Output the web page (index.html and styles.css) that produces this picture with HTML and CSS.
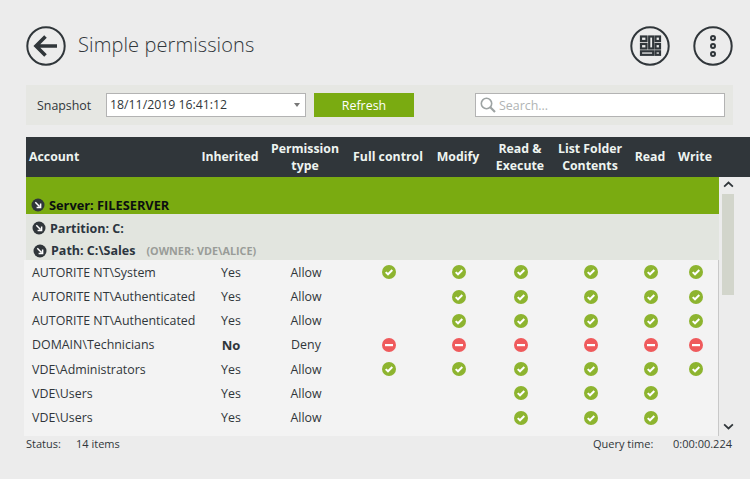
FILE: index.html
```html
<!DOCTYPE html>
<html lang="en">
<head>
<meta charset="utf-8">
<title>Simple permissions</title>
<link rel="stylesheet" href="styles.css">
</head>
<body>
<svg class="defs" width="0" height="0" aria-hidden="true">
  <symbol id="ok" viewBox="0 0 14 14"><circle cx="7" cy="7" r="7" fill="#8db42f"/><path d="M3.7 7.100 6 9.300 10.300 5" fill="none" stroke="#fff" stroke-width="2"/></symbol>
  <symbol id="no" viewBox="0 0 14 14"><circle cx="7" cy="7" r="7" fill="#ef5a5c"/><rect x="3" y="6" width="8" height="2.200" fill="#fff"/></symbol>
  <symbol id="down" viewBox="0 0 14 14"><circle cx="7" cy="7" r="6.500" fill="#30363a"/><path d="M4.300 4.300 8.500 8.500M9.600 5.600V9.600H5.600" fill="none" stroke="#fff" stroke-width="1.500"/></symbol>
</svg>
<div class="app">
  <header class="top">
    <div class="title-wrap">
      <svg class="round" viewBox="0 0 40 40"><circle cx="20" cy="20" r="18.700" fill="none" stroke="#30363a" stroke-width="2"/><path d="M31 20H11M19.500 10.500 10 20l9.500 9.500" fill="none" stroke="#30363a" stroke-width="3.600"/></svg>
      <h1>Simple permissions</h1>
    </div>
    <div class="actions">
      <svg class="round" viewBox="0 0 40 40"><circle cx="20" cy="20" r="18.700" fill="none" stroke="#30363a" stroke-width="2"/><g fill="none" stroke="#30363a" stroke-width="2.200"><rect x="11" y="10.500" width="5.500" height="4.500"/><rect x="11" y="18" width="5.500" height="4.500"/><rect x="19.200" y="10.500" width="4" height="12"/><rect x="25.500" y="10.500" width="4.500" height="4.500"/><rect x="25.500" y="18" width="4.500" height="4.500"/><rect x="11" y="25.300" width="12.200" height="3.500"/><rect x="25.500" y="25.300" width="4.500" height="3.500"/></g></svg>
      <svg class="round" viewBox="0 0 40 40"><circle cx="20" cy="20" r="18.700" fill="none" stroke="#30363a" stroke-width="2"/><g fill="none" stroke="#30363a" stroke-width="2"><circle cx="20" cy="12" r="2"/><circle cx="20" cy="20" r="2"/><circle cx="20" cy="28" r="2"/></g></svg>
    </div>
  </header>
  <div class="toolbar">
    <span class="label">Snapshot</span>
    <div class="select">18/11/2019 16:41:12<span class="caret"></span></div>
    <button class="refresh">Refresh</button>
    <div class="search">
      <svg class="lens" viewBox="0 0 16 16"><circle cx="6.500" cy="6.500" r="5.200" fill="none" stroke="#9da3a3" stroke-width="1.600"/><path d="M10.300 10.300 15 15" stroke="#9da3a3" stroke-width="2.200"/></svg>
      <span>Search...</span>
    </div>
  </div>
  <div class="head row-grid">
    <div class="left">Account</div><div>Inherited</div><div>Permission<br>type</div><div>Full control</div><div>Modify</div><div>Read &amp;<br>Execute</div><div>List Folder<br>Contents</div><div>Read</div><div>Write</div>
  </div>
  <div class="content">
    <div class="list">
      <div class="server"><svg class="arrow"><use href="#down"/></svg>Server: FILESERVER</div>
      <div class="groups">
        <div class="partition"><svg class="arrow"><use href="#down"/></svg>Partition: C:</div>
        <div class="path"><svg class="arrow"><use href="#down"/></svg>Path: C:\Sales<span class="owner">(OWNER: VDE\ALICE)</span></div>
      </div>
      <div class="rows">
        <div class="row row-grid"><div class="left">AUTORITE NT\System</div><div>Yes</div><div>Allow</div><div><svg class="st"><use href="#ok"/></svg></div><div><svg class="st"><use href="#ok"/></svg></div><div><svg class="st"><use href="#ok"/></svg></div><div><svg class="st"><use href="#ok"/></svg></div><div><svg class="st"><use href="#ok"/></svg></div><div><svg class="st"><use href="#ok"/></svg></div></div>
        <div class="row row-grid"><div class="left">AUTORITE NT\Authenticated</div><div>Yes</div><div>Allow</div><div></div><div><svg class="st"><use href="#ok"/></svg></div><div><svg class="st"><use href="#ok"/></svg></div><div><svg class="st"><use href="#ok"/></svg></div><div><svg class="st"><use href="#ok"/></svg></div><div><svg class="st"><use href="#ok"/></svg></div></div>
        <div class="row row-grid"><div class="left">AUTORITE NT\Authenticated</div><div>Yes</div><div>Allow</div><div></div><div><svg class="st"><use href="#ok"/></svg></div><div><svg class="st"><use href="#ok"/></svg></div><div><svg class="st"><use href="#ok"/></svg></div><div><svg class="st"><use href="#ok"/></svg></div><div><svg class="st"><use href="#ok"/></svg></div></div>
        <div class="row row-grid"><div class="left">DOMAIN\Technicians</div><div class="strong">No</div><div>Deny</div><div><svg class="st"><use href="#no"/></svg></div><div><svg class="st"><use href="#no"/></svg></div><div><svg class="st"><use href="#no"/></svg></div><div><svg class="st"><use href="#no"/></svg></div><div><svg class="st"><use href="#no"/></svg></div><div><svg class="st"><use href="#no"/></svg></div></div>
        <div class="row row-grid"><div class="left">VDE\Administrators</div><div>Yes</div><div>Allow</div><div><svg class="st"><use href="#ok"/></svg></div><div><svg class="st"><use href="#ok"/></svg></div><div><svg class="st"><use href="#ok"/></svg></div><div><svg class="st"><use href="#ok"/></svg></div><div><svg class="st"><use href="#ok"/></svg></div><div><svg class="st"><use href="#ok"/></svg></div></div>
        <div class="row row-grid"><div class="left">VDE\Users</div><div>Yes</div><div>Allow</div><div></div><div></div><div><svg class="st"><use href="#ok"/></svg></div><div><svg class="st"><use href="#ok"/></svg></div><div><svg class="st"><use href="#ok"/></svg></div><div></div></div>
        <div class="row row-grid"><div class="left">VDE\Users</div><div>Yes</div><div>Allow</div><div></div><div></div><div><svg class="st"><use href="#ok"/></svg></div><div><svg class="st"><use href="#ok"/></svg></div><div><svg class="st"><use href="#ok"/></svg></div><div></div></div>
      </div>
    </div>
    <div class="scroll">
      <svg class="chev" viewBox="0 0 12 8"><path d="M1 6.500 6 1.800l5 4.700" fill="none" stroke="#30363a" stroke-width="2"/></svg>
      <div class="track"><div class="thumb"></div></div>
      <svg class="chev" viewBox="0 0 12 8"><path d="M1 1.500 6 6.200l5-4.700" fill="none" stroke="#30363a" stroke-width="2"/></svg>
    </div>
  </div>
  <footer class="status">
    <span class="s1">Status:</span><span>14 items</span>
    <span class="s2">Query time:</span><span class="s3">0:00:00.224</span>
  </footer>
</div>
</body>
</html>
```
FILE: styles.css
```css
* { box-sizing: border-box; }
html, body { margin: 0; height: 100%; }
body { background: #ececec; font-family: "Open Sans", "Noto Sans", sans-serif; color: #30363a; overflow: hidden; }
.defs { position: absolute; }
.app { width: 750px; height: 479px; padding-top: 26px; }
.top { display: flex; justify-content: space-between; align-items: center; height: 40px; padding: 0 17px 0 26px; }
.title-wrap { display: flex; align-items: center; gap: 12px; }
.round { width: 40px; height: 40px; display: block; }
h1 { margin: 0 0 3px; font-size: 20px; font-weight: 300; color: #30363a; letter-spacing: 0.1px; }
.actions { display: flex; gap: 23px; }
.toolbar { display: flex; align-items: center; height: 40px; margin: 19px 17px 0 26px; background: #e6e7e3; padding-left: 11px; font-size: 12.400px; }
.label { width: 69px; }
.select { position: relative; width: 200px; height: 24px; background: #fff; border: 1px solid #b3b3b3; padding-left: 3px; line-height: 22px; font-size: 12.300px; }
.caret { position: absolute; right: 5px; top: 9px; border: 3.500px solid transparent; border-top: 4px solid #777; border-bottom: 0; }
.refresh { width: 100px; height: 24px; margin-left: 8px; background: #7aab11; color: #fff; border: 0; font: inherit; padding: 0; }
.search { display: flex; align-items: center; width: 250px; height: 24px; margin-left: 61px; background: #fff; border: 1px solid #b3b3b3; padding-left: 4px; color: #b0b4b4; }
.lens { width: 16px; height: 16px; margin-right: 3px; }
.row-grid { display: grid; grid-template-columns: 171px 68px 82px 84px 56px 68px 72px 48px 42px; align-items: center; text-align: center; }
.left { text-align: left; }
.head { height: 40px; margin: 12px 0 0 26px; padding-bottom: 1px; grid-template-columns: 170px 68px 82px 84px 56px 68px 72px 48px 42px; background: #30363a; color: #eef4f0; font-size: 12.300px; font-weight: 700; line-height: 17px; }
.head .left { padding-left: 3px; }
.content { display: flex; height: 259px; }
.list { width: 719px; }
.server { display: flex; align-items: flex-end; height: 37px; margin-left: 26px; background: #7aab11; color: #0b0f10; font-size: 12.800px; font-weight: 700; padding-left: 5px; line-height: 17px; }
.arrow { width: 14px; height: 14px; margin-right: 4px; flex: none; align-self: center; }
.server .arrow { align-self: flex-end; margin-bottom: 2px; }
.groups { margin-left: 26px; height: 46px; padding-top: 3px; background: #e2e5df; font-size: 12.500px; font-weight: 700; }
.partition, .path { display: flex; align-items: center; color: #2c3540; }
.partition { height: 22px; padding-left: 6px; }
.path { height: 23px; padding-left: 7px; }
.owner { margin-left: 11px; font-size: 10.800px; color: #999c98; }
.rows { margin-left: 24px; height: 176px; padding-top: 0.300px; background: #f3f3f3; border-right: 1px solid #c8c8c8; font-size: 12.400px; }
.row { height: 24.200px; padding-left: 2px; }
.row .left { padding-left: 6px; white-space: nowrap; }
.strong { font-weight: 700; font-size: 13px; }
.st { width: 14px; height: 14px; display: block; margin: 0 auto; }
.scroll { width: 14px; margin-left: 2px; display: flex; flex-direction: column; align-items: center; padding-top: 4px; }
.chev { width: 11px; height: 7px; flex: none; }
.track { width: 12px; height: 225px; margin: 6px 0 4px; }
.thumb { height: 101px; background: #d2d5cb; }
.status { display: flex; height: 15px; padding-left: 26px; font-size: 11px; line-height: 15px; }
.s1 { width: 50px; }
.s2 { margin-left: auto; width: 80px; }
.s3 { width: 77px; }
```
